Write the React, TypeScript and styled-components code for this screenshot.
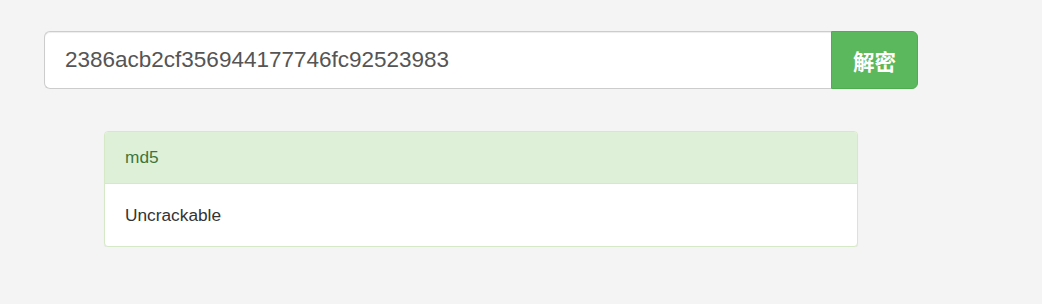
import React from "react";
import styled, { createGlobalStyle } from "styled-components";

const Global = createGlobalStyle`
  html, body { margin: 0; padding: 0; background: #f4f4f4; }
  body { font-family: "Liberation Sans", Arial, "Noto Sans CJK SC", sans-serif; }
  * { box-sizing: border-box; }
`;

const Page = styled.div`
  padding: 31px 0 0 44px;
  width: 917px;
`;

const InputGroup = styled.div`
  display: flex;
  height: 58px;
  width: 874px;
`;

const HashInput = styled.input`
  flex: 1;
  min-width: 0;
  height: 100%;
  border: 1px solid #ccc;
  border-right: none;
  border-radius: 6px 0 0 6px;
  background: #fff;
  padding: 0 20px;
  font-family: "Liberation Sans", Arial, sans-serif;
  font-size: 22.5px;
  color: #555;
  outline: none;
  box-shadow: inset 0 1px 1px rgba(0, 0, 0, 0.075);
`;

const DecryptButton = styled.button`
  width: 87px;
  height: 100%;
  border: 1px solid #4cae4c;
  border-radius: 0 6px 6px 0;
  background: #5cb85c;
  color: #fff;
  font-family: "Noto Sans CJK SC", sans-serif;
  font-weight: 700;
  font-size: 21.5px;
  padding: 0;
  cursor: pointer;
`;

const Panel = styled.div`
  margin: 42px 59px 0 60px;
  border: 1px solid #d6e9c6;
  border-radius: 4px;
  background: #fff;
  overflow: hidden;
  box-shadow: 0 1px 1px rgba(0, 0, 0, 0.05);
`;

const PanelHeading = styled.div`
  height: 52px;
  display: flex;
  align-items: center;
  padding: 0 20px;
  background: #dff0d8;
  border-bottom: 1px solid #d6e9c6;
  color: #3c763d;
  font-size: 17.3px;
`;

const PanelBody = styled.div`
  height: 62px;
  display: flex;
  align-items: center;
  padding: 0 20px;
  color: #333;
  font-size: 17.3px;
`;

export default function App() {
  return (
    <>
      <Global />
      <Page>
        <InputGroup>
          <HashInput defaultValue="2386acb2cf356944177746fc92523983" />
          <DecryptButton>解密</DecryptButton>
        </InputGroup>
        <Panel>
          <PanelHeading>md5</PanelHeading>
          <PanelBody>Uncrackable</PanelBody>
        </Panel>
      </Page>
    </>
  );
}
